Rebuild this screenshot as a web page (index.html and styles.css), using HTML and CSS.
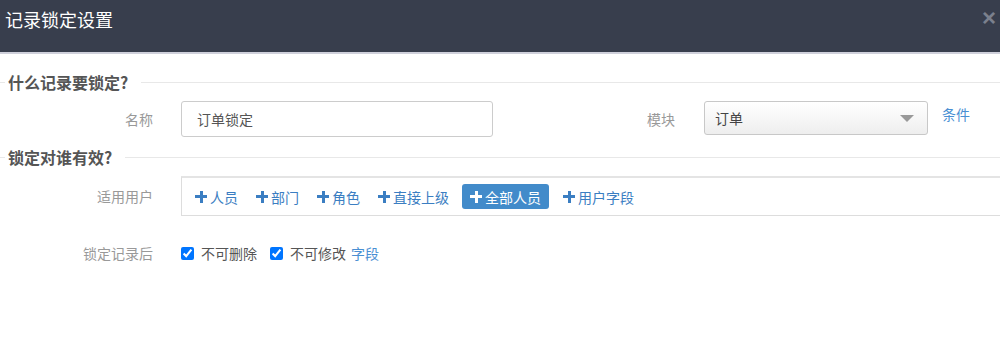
FILE: index.html
```html
<!DOCTYPE html>
<html lang="zh-CN">
  <head>
    <meta charset="UTF-8" />
    <meta name="viewport" content="width=device-width, initial-scale=1.0" />
    <title>记录锁定设置</title>
    <link rel="stylesheet" href="styles.css">
  </head>
  <body>
    <div class="modal-header">
      <div class="modal-title">记录锁定设置</div>
      <span class="close">&times;</span>
    </div>

    <div class="modal-body">
      <div class="legend">
        <span class="legend-lead"></span>
        <span class="legend-text">什么记录要锁定?</span>
        <span class="legend-line"></span>
      </div>

      <div class="row row-name">
        <label class="label">名称</label>
        <input class="text-input" type="text" value="订单锁定" />
        <label class="label label-module">模块</label>
        <div class="select">
          <span>订单</span>
          <span class="caret"></span>
        </div>
        <a class="link link-cond" href="#">条件</a>
      </div>

      <div class="legend">
        <span class="legend-lead"></span>
        <span class="legend-text">锁定对谁有效?</span>
        <span class="legend-line"></span>
      </div>

      <div class="row row-users">
        <label class="label">适用用户</label>
        <div class="user-box">
          <a class="add-item" href="#"><span class="plus"></span>人员</a>
          <a class="add-item" href="#"><span class="plus"></span>部门</a>
          <a class="add-item" href="#"><span class="plus"></span>角色</a>
          <a class="add-item" href="#"><span class="plus"></span>直接上级</a>
          <a class="add-item active" href="#"><span class="plus"></span>全部人员</a>
          <a class="add-item" href="#"><span class="plus"></span>用户字段</a>
        </div>
      </div>

      <div class="row row-lock">
        <label class="label">锁定记录后</label>
        <label class="check"><input type="checkbox" checked />不可删除</label>
        <label class="check"><input type="checkbox" checked />不可修改</label>
        <a class="link" href="#">字段</a>
      </div>
    </div>
  </body>
</html>
```

FILE: styles.css
```css
body {
  margin: 0;
  padding: 0;
  background: #fff;
  font-family: "Noto Sans CJK SC", "Liberation Sans", sans-serif;
  font-size: 14px;
  color: #555;
  overflow: hidden;
}

.modal-header {
  height: 52px;
  background-color: #383e4d;
  border-bottom: 2px solid #cfd0db;
  display: flex;
  align-items: flex-start;
  justify-content: space-between;
}

.modal-title {
  color: #fff;
  font-size: 18px;
  line-height: 24px;
  padding: 7px 5px;
}

.close {
  color: #7b808d;
  font-family: "Liberation Sans", sans-serif;
  font-size: 24px;
  font-weight: bold;
  line-height: 24px;
  padding: 6px 4px 0 0;
}

.legend {
  display: flex;
  align-items: center;
  margin-top: 18px;
  height: 20px;
}

.legend + .row {
  margin-top: 9px;
}

.legend-lead {
  width: 5px;
  border-top: 1px solid #e8e8e8;
}

.legend-text {
  font-size: 16px;
  font-weight: bold;
  color: #555;
  padding: 0 3px;
  line-height: 20px;
}

.legend-line {
  flex: 1;
  border-top: 1px solid #e8e8e8;
  margin-left: 10px;
}

.row + .legend {
  margin-top: 10px;
}

.row {
  display: flex;
  align-items: center;
}

.label {
  width: 153px;
  margin-right: 28px;
  text-align: right;
  color: #999;
  flex-shrink: 0;
}

.text-input {
  box-sizing: border-box;
  width: 312px;
  height: 36px;
  border: 1px solid #ccc;
  border-radius: 3px;
  padding: 0 15px;
  font-family: inherit;
  font-size: 14px;
  color: #555;
  outline: none;
}

.label-module {
  width: 182px;
  margin-right: 29px;
}

.select {
  box-sizing: border-box;
  width: 224px;
  height: 34px;
  border: 1px solid #c8c8c8;
  border-radius: 3px;
  background: linear-gradient(#fff, #eee);
  display: flex;
  align-items: center;
  justify-content: space-between;
  padding: 0 13px 0 10px;
  color: #444;
  margin-top: -2px;
}

.caret {
  width: 0;
  height: 0;
  border-left: 7px solid transparent;
  border-right: 7px solid transparent;
  border-top: 7px solid #999;
}

.link {
  color: #4a8fd3;
  text-decoration: none;
}

.link-cond {
  margin-left: 14px;
  align-self: flex-start;
  margin-top: 3px;
}

.user-box {
  box-sizing: border-box;
  flex: 1;
  height: 40px;
  margin-right: -10px;
  border: 1px solid #ddd;
  border-top: 2px solid #e4e4e4;
  display: flex;
  align-items: center;
  padding: 0 0 0 8px;
}

.add-item {
  display: flex;
  align-items: center;
  height: 25px;
  padding: 0 5px;
  margin-right: 8px;
  color: #3b7ec2;
  text-decoration: none;
  border-radius: 3px;
}

.add-item.active {
  background-color: #428bca;
  color: #fff;
  padding: 0 8px;
  margin-right: 9px;
}

.plus {
  position: relative;
  width: 12px;
  height: 12px;
  margin-right: 3px;
}

.plus::before,
.plus::after {
  content: "";
  position: absolute;
  background: currentColor;
}

.plus::before {
  left: 0;
  top: 4px;
  width: 12px;
  height: 3px;
}

.plus::after {
  left: 4.5px;
  top: 0;
  width: 3px;
  height: 12px;
}

.row-lock {
  margin-top: 27px;
  height: 20px;
}

.check {
  display: flex;
  align-items: center;
  margin-right: 5px;
  color: #555;
}

.check input {
  margin: 0 7px 0 0;
  width: 13px;
  height: 13px;
}

.check + .check {
  margin-left: 8px;
}
```
